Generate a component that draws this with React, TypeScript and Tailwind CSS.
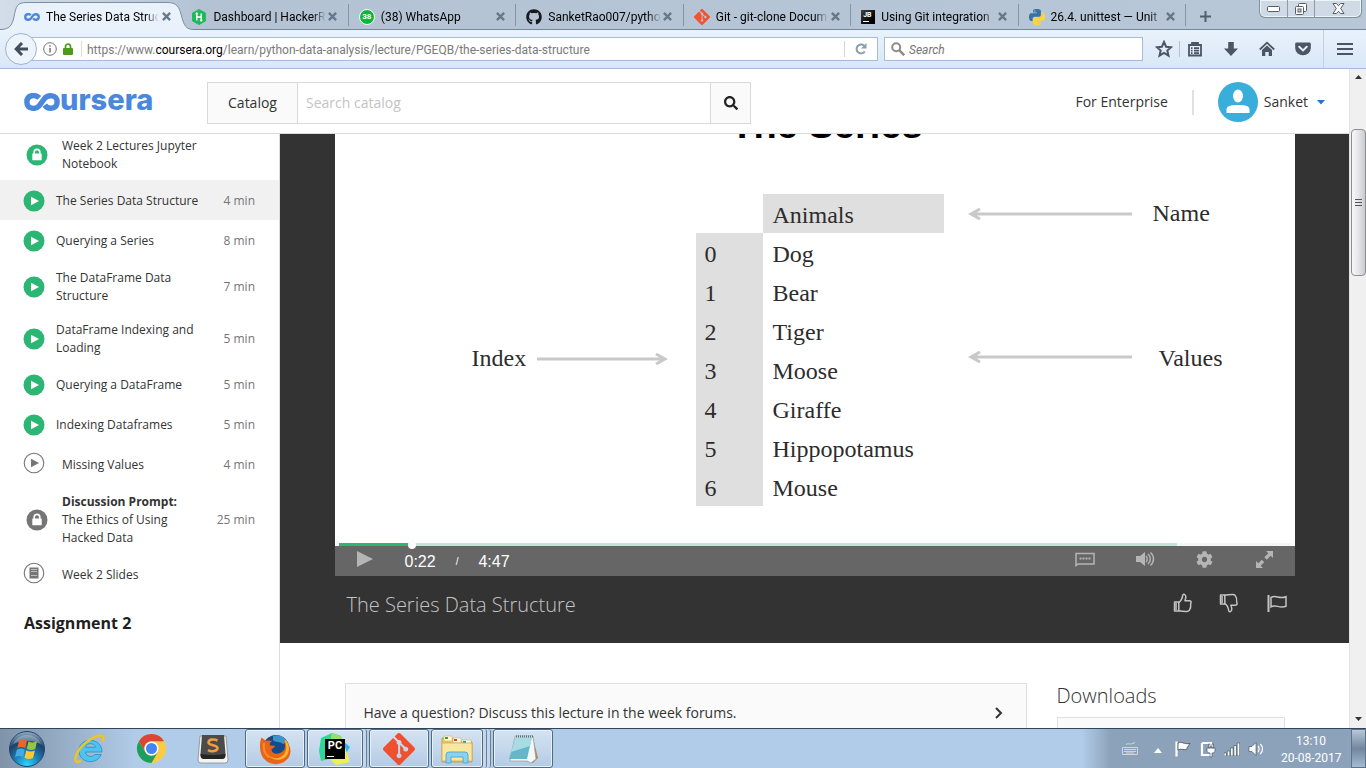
import type { ReactNode } from "react";
import { FaGithub, FaSearch, FaCog } from "react-icons/fa";
import { SiGit } from "react-icons/si";

const UI = "font-['Roboto','Noto_Sans',sans-serif]";

/* ---------- Logos and favicons ---------- */

function Loop({ className, stroke }: { className: string; stroke: number }) {
  return (
    <svg viewBox="0 0 40 20" className={className} fill="none" stroke="#4a88dc" strokeWidth={stroke} aria-hidden="true">
      <path d="M17 5.500 C13 1.500 3.200 1.500 3.200 10 C3.200 18.500 13.500 18.500 17 14 L22.500 6.500 C26.500 1.500 36.800 1.500 36.800 10 C36.800 18.500 26.500 18.500 23 13.500" />
    </svg>
  );
}

function HackerRankIcon() {
  return (
    <svg viewBox="0 0 16 16" className="size-4 shrink-0" aria-hidden="true">
      <path d="M8 .5 14.4 4v8L8 15.5 1.6 12V4z" fill="#1fb95a" stroke="#1fb95a" strokeWidth="1" strokeLinejoin="round" />
      <path d="M5.8 4.3v7.2M10.2 4.5v7.2M5.8 8h4.4M4.8 5.4l1-1.2 1 1.2M9.2 10.6l1 1.2 1-1.2" stroke="#fff" strokeWidth="1.4" fill="none" />
    </svg>
  );
}

function WhatsAppIcon() {
  return (
    <span className="relative flex size-4 shrink-0 items-center justify-center rounded-full border border-white bg-[#12b53c]">
      <span className="text-[8px] leading-none font-bold text-white">38</span>
    </span>
  );
}

function JetBrainsIcon() {
  return (
    <span className="flex size-[14px] shrink-0 flex-col justify-between bg-gradient-to-br from-[#444] to-black p-[2px]">
      <span className="text-[7px] leading-none font-bold text-white">JB</span>
      <span className="h-px w-[6px] bg-white" />
    </span>
  );
}

const snake =
  "M14.25.18l.9.2.73.26.59.3.45.32.34.34.25.34.16.33.1.3.04.26.02.2-.01.13V8.5l-.05.63-.13.55-.21.46-.26.38-.3.31-.33.25-.35.19-.35.14-.33.1-.3.07-.26.04-.21.02H8.77l-.69.05-.59.14-.5.22-.41.27-.33.32-.27.35-.2.36-.15.37-.1.35-.07.32-.04.27-.02.21v3.06H3.17l-.21-.03-.28-.07-.32-.12-.35-.18-.36-.26-.36-.36-.35-.46-.32-.59-.28-.73-.21-.88-.14-1.05-.05-1.23.06-1.22.16-1.04.24-.87.32-.71.36-.57.4-.44.42-.33.42-.24.4-.16.36-.1.32-.05.24-.01h.16l.06.01h8.16v-.83H6.18l-.01-2.75-.02-.37.05-.34.11-.31.17-.28.25-.26.31-.23.38-.2.44-.18.51-.15.58-.12.64-.1.71-.06.77-.04.84-.02 1.27.05zm-6.3 1.98l-.23.33-.08.41.08.41.23.34.33.22.41.09.41-.09.33-.22.23-.34.08-.41-.08-.41-.23-.33-.33-.22-.41-.09-.41.09z";

function PythonIcon() {
  return (
    <svg viewBox="0 0 24 24" className="size-4 shrink-0" aria-hidden="true">
      <path d={snake} fill="#3572a5" />
      <path d={snake} fill="#ffd43b" transform="rotate(180 12 12)" />
    </svg>
  );
}

/* ---------- Browser chrome ---------- */

type Tab = { title: string; icon: ReactNode; active?: boolean };

const tabs: Tab[] = [
  { title: "The Series Data Struc", icon: <Loop className="h-2 w-4 shrink-0" stroke={6} />, active: true },
  { title: "Dashboard | HackerR", icon: <HackerRankIcon /> },
  { title: "(38) WhatsApp", icon: <WhatsAppIcon /> },
  { title: "SanketRao007/pytho", icon: <FaGithub className="size-4 shrink-0 text-[#16191d]" /> },
  { title: "Git - git-clone Docum", icon: <SiGit className="size-4 shrink-0 text-[#f4512c]" /> },
  { title: "Using Git integration", icon: <JetBrainsIcon /> },
  { title: "26.4. unittest — Unit", icon: <PythonIcon /> },
];

function TabStrip() {
  return (
    <div className="relative flex h-[30px] shrink-0 items-stretch border-b border-[#74869a] bg-gradient-to-r from-[#d3dde8] via-[#b3c3d4] via-15% to-[#b7c7d8] pl-[14px]">
      <div className="grid w-[1172px] grid-cols-7" role="tablist">
        {tabs.map((tab) => (
          <div key={tab.title} role="tab" className="relative flex min-w-0 items-center pt-1">
            {tab.active && (
              <svg viewBox="0 0 194 30" className="absolute top-0 -left-[14px] h-[30px] w-[194px]" aria-hidden="true">
                <path d="M0 30 V29.5 C9 29.5 12 26 14 17 C16 6 17 2.5 27 2.5 H167 C177 2.5 179 7 181 14 C184 26 186 29.5 194 29.5 V30Z" fill="#e9f2fb" />
                <path d="M0 29.5 C9 29.5 12 26 14 17 C16 6 17 2.5 27 2.5 H167 C177 2.5 179 7 181 14 C184 26 186 29.5 194 29.5" fill="none" stroke="#7b8fa5" />
              </svg>
            )}
            <div className="relative flex min-w-0 flex-1 items-center pl-[10px]">
              {tab.icon}
              <span className="ml-[6px] min-w-0 flex-1 overflow-hidden text-[12px] leading-5 whitespace-nowrap text-black [mask-image:linear-gradient(to_right,black_88%,transparent)]">
                {tab.title}
              </span>
              <button type="button" aria-label="Close tab" className="mr-2 flex size-[14px] items-center justify-center">
                <svg viewBox="0 0 10 10" className="size-[9px]" stroke="#66788b" strokeWidth="2.6" aria-hidden="true">
                  <path d="M1 1 9 9M9 1 1 9" />
                </svg>
              </button>
            </div>
            {!tab.active && <span className="-mt-1 h-[22px] w-px bg-[#8495a7]" />}
          </div>
        ))}
      </div>
      <button type="button" aria-label="New tab" className="flex w-[38px] items-center justify-center pt-1">
        <svg viewBox="0 0 11 11" className="size-[11px]" stroke="#4f5f70" strokeWidth="2" aria-hidden="true">
          <path d="M5.500 0v11M0 5.500h11" />
        </svg>
      </button>
      <div className="mr-1 ml-auto flex h-[18px] w-[103px] rounded-b-md border border-t-0 border-[#7f90a2] bg-[#d0dae5] shadow-[inset_0_0_0_1px_#eef3f8]">
        <button type="button" aria-label="Minimize" className="flex w-7 items-center justify-center border-r border-[#8c9bac]">
          <svg viewBox="0 0 13 6" className="h-[6px] w-[13px]" aria-hidden="true">
            <rect x=".5" y=".5" width="12" height="5" rx="1" fill="#fff" stroke="#555c66" />
          </svg>
        </button>
        <button type="button" aria-label="Restore" className="flex w-[27px] items-center justify-center border-r border-[#8c9bac]">
          <svg viewBox="0 0 12 12" className="size-3" aria-hidden="true">
            <rect x="3.500" y=".5" width="8" height="8" rx="1" fill="#fff" stroke="#555c66" />
            <rect x=".5" y="3.500" width="8" height="8" rx="1" fill="#fff" stroke="#555c66" />
            <rect x="3" y="6" width="3" height="3" fill="#c9d3df" stroke="#555c66" />
          </svg>
        </button>
        <button type="button" aria-label="Close" className="flex flex-1 items-center justify-center">
          <svg viewBox="0 0 13 11" className="h-[11px] w-[13px]" aria-hidden="true">
            <path d="M1 .5h3.500l2 2.300 2-2.300H12L8.700 5.500 12 10.500H8.500l-2-2.300-2 2.300H1L4.300 5.500z" fill="#fff" stroke="#555c66" />
          </svg>
        </button>
      </div>
    </div>
  );
}

function Toolbar() {
  return (
    <div className="flex h-[39px] shrink-0 items-center border-b border-[#a3bcd8] bg-gradient-to-b from-[#e9f2fb] to-[#d8e7f7] pl-[5px]">
      <button type="button" aria-label="Back" className="relative z-10 flex size-8 items-center justify-center rounded-full border border-[#9fb3ca] bg-[#edf4fb]">
        <svg viewBox="0 0 14 14" className="size-[14px]" fill="none" stroke="#424f5c" strokeWidth="3" aria-hidden="true">
          <path d="M8 1 2.200 7 8 13M2.500 7H14" />
        </svg>
      </button>
      <div className="-ml-2 flex h-6 min-w-0 flex-1 items-center border border-[#a7bdd7] bg-white pl-[13px]">
        <svg viewBox="0 0 14 14" className="size-[14px] shrink-0" fill="none" stroke="#737373" aria-hidden="true">
          <circle cx="7" cy="7" r="6.300" />
          <path d="M7 6v4.500M7 3.200v1.600" strokeWidth="1.500" />
        </svg>
        <svg viewBox="0 0 10 12" className="ml-[6px] h-3 w-[10px] shrink-0" aria-hidden="true">
          <path d="M2.500 6V3.500a2.500 2.500 0 0 1 5 0V6" fill="none" stroke="#4a9a1c" strokeWidth="1.700" />
          <rect y="5" width="10" height="7" rx="1" fill="#4a9a1c" />
        </svg>
        <span className="mr-[5px] ml-2 h-4 w-px shrink-0 bg-[#dcdcdc]" />
        <div className="min-w-0 flex-1 overflow-hidden pt-px text-[12px] whitespace-nowrap text-[#7a7a7a]">
          https://www.<span className="text-black">coursera.org</span>/learn/python-data-analysis/lecture/PGEQB/the-series-data-structure
        </div>
        <span className="h-4 w-px bg-[#d5d5d5]" />
        <button type="button" aria-label="Reload" className="flex w-8 justify-center">
          <svg viewBox="0 0 12 12" className="size-3" aria-hidden="true">
            <path d="M9.800 8.500A4.500 4.500 0 1 1 9 2.500" fill="none" stroke="#8b9cac" strokeWidth="2" />
            <path d="M11.500 0v5.500H6z" fill="#8b9cac" />
          </svg>
        </button>
      </div>
      <div className="ml-[6px] flex h-6 w-[259px] items-center gap-1 border border-[#a7bdd7] bg-white pl-[6px]">
        <svg viewBox="0 0 14 14" className="size-[14px] shrink-0" fill="none" stroke="#8c8c8c" strokeWidth="2" aria-hidden="true">
          <circle cx="5.200" cy="5.200" r="4" />
          <path d="m8.200 8.200 5 5" strokeWidth="2.600" />
        </svg>
        <input aria-label="Search" placeholder="Search" className="min-w-0 flex-1 pt-px text-[12px] italic outline-none placeholder:text-[#757575]" />
      </div>
      <div className="flex h-full items-center text-[#4a5663]">
        <button type="button" aria-label="Bookmark" className="ml-3 flex w-[18px] justify-center">
          <svg viewBox="0 0 18 18" className="size-[18px]" fill="none" stroke="currentColor" strokeWidth="2" aria-hidden="true">
            <path d="m9 2 2.100 4.700 5 .5-3.800 3.400 1.200 5L9 13l-4.500 2.600 1.200-5L1.900 7.200l5-.5z" />
          </svg>
        </button>
        <span className="mx-[6px] h-4 w-px bg-[#b4c2d1]" />
        <button type="button" aria-label="Library" className="ml-px flex w-4 justify-center">
          <svg viewBox="0 0 16 16" className="size-4" fill="none" stroke="currentColor" strokeWidth="1.800" aria-hidden="true">
            <path d="M2 4h12v10.500H2zM4 7.200h1.500M7 7.200h5M4 9.700h1.500M7 9.700h5M4 12.200h1.500M7 12.200h5" />
            <path d="M5 4V2h6v2" />
          </svg>
        </button>
        <button type="button" aria-label="Downloads" className="ml-5 flex w-4 justify-center">
          <svg viewBox="0 0 16 16" className="size-4" fill="currentColor" aria-hidden="true">
            <path d="M5.200 1h5.600v6.500H15L8 15 1 7.500h4.200z" />
          </svg>
        </button>
        <button type="button" aria-label="Home" className="ml-5 flex w-4 justify-center">
          <svg viewBox="0 0 16 16" className="size-4" fill="none" stroke="currentColor" strokeWidth="1.800" aria-hidden="true">
            <path d="M.8 8.500 8 1.700l7.200 6.800" />
            <path d="M3 9 8 4.500 13 9v6h-3.300v-4H6.300v4H3z" fill="currentColor" stroke="none" />
          </svg>
        </button>
        <button type="button" aria-label="Pocket" className="ml-5 flex w-4 justify-center">
          <svg viewBox="0 0 16 16" className="size-4" aria-hidden="true">
            <path d="M1.500 1.500h13q1.300 0 1.300 1.300V7a7.800 7.300 0 0 1-15.600 0V2.800q0-1.300 1.300-1.300" fill="currentColor" />
            <path d="m4.200 5.700 3.800 3.700 3.800-3.700" fill="none" stroke="#e6eff8" strokeWidth="2" strokeLinecap="round" />
          </svg>
        </button>
        <span className="ml-3 h-full w-px bg-[#c2d1e1]" />
        <button type="button" aria-label="Menu" className="mr-[13px] ml-[13px] flex w-4 flex-col gap-[3px]">
          <span className="h-[2px] w-full bg-current" />
          <span className="h-[2px] w-full bg-current" />
          <span className="h-[2px] w-full bg-current" />
        </button>
      </div>
    </div>
  );
}

/* ---------- Site header ---------- */

function SiteHeader() {
  return (
    <header className="flex h-[65px] shrink-0 items-start border-b border-[#dcdcdc] bg-white px-6 pt-[13px] text-[14px] text-[#333]">
      <a href="#home" aria-label="Coursera" className="flex h-10 w-[183px] items-center text-[#4a88dc]">
        <Loop className="h-[18px] w-9" stroke={6} />
        <span className="-mt-1 font-['Inter',sans-serif] text-[29px] leading-8 font-extrabold">ursera</span>
      </a>
      <form className="flex h-[42px] w-[544px] border border-[#d9d9d9]" onSubmit={(e) => e.preventDefault()}>
        <button type="button" className="w-[90px] border-r border-[#d9d9d9] bg-[#fafafa] pb-[2px] text-[14px]">Catalog</button>
        <input aria-label="Search catalog" placeholder="Search catalog" className="min-w-0 flex-1 px-2 pb-[2px] outline-none placeholder:text-[#c4c4c4]" />
        <button type="submit" aria-label="Search" className="flex w-10 items-center justify-center border-l border-[#d9d9d9] bg-[#fafafa]">
          <FaSearch className="size-[14px] text-[#222]" />
        </button>
      </form>
      <div className="ml-auto flex h-10 items-center">
        <a href="#enterprise" className="pb-[2px]">For Enterprise</a>
        <span className="mr-6 ml-6 h-[25px] w-[2px] bg-[#e0e0e0]" />
        <button type="button" className="flex items-center">
          <svg viewBox="0 0 40 40" className="size-10" aria-hidden="true">
            <circle cx="20" cy="20" r="20" fill="#3aaedb" />
            <ellipse cx="20" cy="14" rx="5" ry="6.500" fill="#fff" />
            <path d="M8.500 31v-3.500c0-4 6-4.500 11.500-4.500s11.500.5 11.500 4.500V31z" fill="#fff" />
          </svg>
          <span className="ml-[6px] pb-[2px]">Sanket</span>
          <svg viewBox="0 0 8 5" className="ml-[9px] h-[5px] w-2" aria-hidden="true">
            <path d="M0 0h8L4 4.500z" fill="#2a73cc" />
          </svg>
        </button>
      </div>
    </header>
  );
}

/* ---------- Lesson list ---------- */

type Kind = "lock-done" | "play-done" | "play" | "lock" | "slides";
type Lesson = { title: string; prefix?: string; time?: string; kind: Kind; current?: boolean };

const lessons: Lesson[] = [
  { title: "Week 2 Lectures Jupyter Notebook", kind: "lock-done" },
  { title: "The Series Data Structure", time: "4 min", kind: "play-done", current: true },
  { title: "Querying a Series", time: "8 min", kind: "play-done" },
  { title: "The DataFrame Data Structure", time: "7 min", kind: "play-done" },
  { title: "DataFrame Indexing and Loading", time: "5 min", kind: "play-done" },
  { title: "Querying a DataFrame", time: "5 min", kind: "play-done" },
  { title: "Indexing Dataframes", time: "5 min", kind: "play-done" },
  { title: "Missing Values", time: "4 min", kind: "play" },
  { prefix: "Discussion Prompt:", title: "The Ethics of Using Hacked Data", time: "25 min", kind: "lock" },
  { title: "Week 2 Slides", kind: "slides" },
];

function LessonIcon({ kind }: { kind: Kind }) {
  const locked = kind === "lock" || kind === "lock-done";
  const filled = locked || kind === "play-done";
  const color = kind === "play-done" || kind === "lock-done" ? "#2bb673" : "#757575";
  const ink = filled ? "#fff" : color;
  return (
    <svg viewBox="0 0 22 22" className="size-[22px]" aria-hidden="true">
      {filled ? (
        <circle cx="11" cy="11" r="10.500" fill={color} />
      ) : (
        <circle cx="11" cy="11" r="9.800" fill="none" stroke={color} strokeWidth="1.100" />
      )}
      {locked && (
        <>
          <path d="M8.200 10V8.200a2.800 2.800 0 0 1 5.600 0V10" fill="none" stroke={ink} strokeWidth="1.600" />
          <rect x="6.300" y="9.500" width="9.400" height="6.700" rx=".5" fill={ink} />
        </>
      )}
      {(kind === "play" || kind === "play-done") && <path d="M8 6.700v8.600l8-4.300z" fill={ink} />}
      {kind === "slides" && (
        <>
          <rect x="6.500" y="5.500" width="9" height="11" fill={ink} />
          <path d="M8 7.500h6M8 9.500h6M8 13.500h6" stroke="#cfcfcf" strokeWidth=".8" />
        </>
      )}
    </svg>
  );
}

function Sidebar() {
  return (
    <nav className="w-[280px] shrink-0 overflow-hidden border-r border-[#dcdcdc] bg-white text-[12px] leading-[18px] text-[#333]">
      <ul className="-mt-[6px]">
        {lessons.map((l) => {
          const locked = l.kind === "lock" || l.kind === "lock-done";
          const raised = l.kind === "play" || l.kind === "slides";
          return (
            <li key={l.title}>
              <a href="#lesson" className={`flex min-h-10 items-center pt-[9px] pr-6 pb-[7px] ${locked ? "pl-[26px]" : "pl-[23px]"} ${l.current ? "bg-[#f1f1f1]" : ""}`}>
                <span className={raised ? "-mt-1" : ""}>
                  <LessonIcon kind={l.kind} />
                </span>
                <span className={`min-w-0 flex-1 ${raised ? "ml-[17px]" : locked ? "ml-[14px]" : "ml-[11px]"}`}>
                  <span className={`block ${l.time ? "max-w-[150px]" : "max-w-[160px]"} ${l.kind === "lock" ? "pr-5" : ""}`}>
                    {l.prefix && <strong className="block font-bold whitespace-nowrap">{l.prefix}</strong>}
                    {l.title}
                  </span>
                </span>
                {l.time && <span className="whitespace-nowrap text-[#757575]">{l.time}</span>}
              </a>
            </li>
          );
        })}
      </ul>
      <h2 className="mt-[18px] pl-6 text-[16px] leading-[22px] font-bold text-[#1f1f1f]">Assignment 2</h2>
    </nav>
  );
}

/* ---------- Video ---------- */

function Arrow({ left, className }: { left?: boolean; className: string }) {
  return (
    <svg viewBox="0 0 164 12" preserveAspectRatio={left ? "xMinYMid slice" : "xMaxYMid slice"} className={className} fill="none" stroke="#c9c9c9" strokeWidth="3" aria-hidden="true">
      {left ? <path d="M3 6H164M12 1 3 6l9 5" /> : <path d="M0 6H161M152 1l9 5-9 5" />}
    </svg>
  );
}

const animals = ["Dog", "Bear", "Tiger", "Moose", "Giraffe", "Hippopotamus", "Mouse"];

function Slide() {
  return (
    <div className="overflow-hidden bg-white pb-10 font-['Liberation_Serif',serif] text-[24px] leading-[35px] text-[#2c2c2c]">
      <h1 className="-mt-[29px] pl-6 text-center font-['Liberation_Sans',sans-serif] text-[38px] leading-10 font-bold text-black">The Series</h1>
      <div className="mt-[49px] flex">
        <div className="flex-1 pt-[145px] pl-[137px]">
          <div className="flex h-[39px] items-center gap-[11px]">
            Index
            <Arrow className="h-3 w-[131px]" />
          </div>
        </div>
        <table className="w-[248px] shrink-0 border-collapse text-left">
          <thead>
            <tr className="h-[39px]">
              <td className="w-[67px] p-0" />
              <th scope="col" className="bg-[#dfdfdf] p-0 pt-1 pl-[10px] font-normal">Animals</th>
            </tr>
          </thead>
          <tbody>
            {animals.map((name, i) => (
              <tr key={name} className="h-[39px]">
                <th scope="row" className="bg-[#dfdfdf] p-0 pt-1 pl-[9px] font-normal">{i}</th>
                <td className="p-0 pt-1 pl-[10px]">{name}</td>
              </tr>
            ))}
          </tbody>
        </table>
        <div className="w-[351px] pl-6">
          <div className="flex h-[39px] items-center gap-[21px]">
            <Arrow left className="h-3 w-[164px]" />
            Name
          </div>
          <div className="mt-[106px] flex h-[39px] items-center gap-[27px]">
            <Arrow left className="mb-1 h-3 w-[164px]" />
            Values
          </div>
        </div>
      </div>
    </div>
  );
}

function ThumbIcon({ down }: { down?: boolean }) {
  return (
    <svg viewBox="0 0 20 20" className={`size-5 ${down ? "-scale-y-100" : ""}`} fill="none" stroke="currentColor" strokeWidth="1.500" strokeLinejoin="round" aria-hidden="true">
      <path d="M1.500 9h4.300v9H1.500z" />
      <path d="M2.300 10h1.500v7H2.300z" fill="currentColor" stroke="none" />
      <path d="M5.800 9.500c3-2 3.500-4 4-7.300.3-1.500 3-1.200 3 1.800 0 1.500-.6 2.700-.9 3.800h4.400c2 0 2.200 1.700 1.400 2.800.3 3-.2 5.200-1.400 6.800-.6.900-1.500 1-2.700 1-3.500 0-4.600 0-7.800-.7" />
    </svg>
  );
}

function Player() {
  return (
    <section className="bg-[#333] pb-[25px]">
      <div className="mx-auto max-w-[960px]">
        <Slide />
        <div className="-mt-[3px] flex h-[3px] px-1">
          <div className="relative w-[73px] bg-[#2bb673]">
            <span className="absolute -right-1 -bottom-[3px] size-2 rounded-full bg-white" />
          </div>
          <div className="w-[765px] bg-[#c3e6d6]" />
          <div className="flex-1 bg-[#f5f5f5]" />
        </div>
        <div className="flex h-[30px] items-center bg-[#666] font-['Liberation_Sans',sans-serif] text-[16px] text-white">
          <button type="button" aria-label="Play" className="ml-[22px] w-4 pb-1">
            <svg viewBox="0 0 16 16" className="size-4" aria-hidden="true"><path d="M0 0v16l16-8z" fill="#b5b5b5" /></svg>
          </button>
          <span className="ml-8 pt-px">0:22</span>
          <span className="ml-5 pt-px text-[10px]">/</span>
          <span className="ml-5 pt-px">4:47</span>
          <div className="ml-auto flex items-center gap-10 pr-5 pb-1 text-[#b5b5b5]">
            <button type="button" aria-label="Subtitles">
              <svg viewBox="0 0 20 16" className="h-4 w-5" fill="none" stroke="currentColor" strokeWidth="1.500" aria-hidden="true">
                <path d="M1 14.500V2.500h18v10.500H3z" />
                <path d="M4.500 7.500h11" strokeWidth="2" strokeDasharray="2 1" />
              </svg>
            </button>
            <button type="button" aria-label="Volume">
              <svg viewBox="0 0 20 16" className="h-4 w-5" fill="none" stroke="currentColor" strokeWidth="1.500" aria-hidden="true">
                <path d="M1 5h4l5-4v14l-5-4H1z" fill="currentColor" stroke="none" />
                <path d="M11 5c1.500 1.500 1.500 4.500 0 6M13 3c3 2.500 3 7.500 0 10M15.500 1.500c4 3.500 4 9.500 0 13" />
              </svg>
            </button>
            <button type="button" aria-label="Settings" className="flex w-5 justify-center"><FaCog className="size-[17px]" /></button>
            <button type="button" aria-label="Full screen" className="flex w-5 justify-center">
              <svg viewBox="0 0 17 17" className="size-[17px]" fill="currentColor" aria-hidden="true">
                <path d="M10 0h7v7l-2.300-2.300-4 4-2.400-2.400 4-4zM7 17H0v-7l2.300 2.300 4-4 2.400 2.400-4 4z" />
                <path d="M6 8l3 3" stroke="#666" strokeWidth="1.300" />
              </svg>
            </button>
          </div>
        </div>
        <div className="flex h-[42px] items-center pt-4 pr-2 pl-3 text-[#c4c4c4]">
          <h2 className="text-[20px] leading-6 font-light">The Series Data Structure</h2>
          <div className="ml-auto flex items-center gap-[26px] pb-1">
            <button type="button" aria-label="Like"><ThumbIcon /></button>
            <button type="button" aria-label="Dislike"><ThumbIcon down /></button>
            <button type="button" aria-label="Report" className="ml-[2px]">
              <svg viewBox="0 0 20 20" className="size-5" fill="none" stroke="currentColor" strokeWidth="1.500" aria-hidden="true">
                <path d="M1.500 2v17" strokeWidth="2" />
                <path d="M4 4.500c5-3 8 2 15-.800v9.500c-7 2.800-10-2.500-15 .600z" />
              </svg>
            </button>
          </div>
        </div>
      </div>
    </section>
  );
}

function LowerPanels() {
  return (
    <div className="flex-1 bg-white text-[#333]">
      <div className="mx-auto flex max-w-[940px] gap-[30px] pt-10">
        <a href="#forums" className="flex h-[60px] flex-1 items-center justify-between border border-[#e0e0e0] bg-[#fafafa] pr-[23px] pl-[18px] text-[14px] leading-5">
          Have a question? Discuss this lecture in the week forums.
          <svg viewBox="0 0 8 12" className="h-3 w-2" fill="none" stroke="#333" strokeWidth="2" aria-hidden="true"><path d="m1 1 5 5-5 5" /></svg>
        </a>
        <aside className="w-[228px]">
          <h2 className="pt-px text-[20px] leading-6 font-light">Downloads</h2>
          <div className="mt-[9px] h-12 border border-[#e0e0e0] bg-[#fafafa]" />
        </aside>
      </div>
    </div>
  );
}

function ScrollBar() {
  return (
    <div className="flex w-[17px] shrink-0 flex-col items-center border-l border-[#e3e3e3] bg-[#f0f0f0] py-[6px]" aria-hidden="true">
      <svg viewBox="0 0 7 5" className="h-[5px] w-[7px]"><path d="M0 4h7L3.500 0z" fill="#333" /></svg>
      <div className="mt-[49px] flex h-[147px] w-[15px] flex-col items-center justify-center gap-[2px] rounded-sm border border-[#8f8f8f] bg-gradient-to-r from-[#f7f7f7] via-[#e6e6e9] to-[#c9c9d0]">
        <span className="h-px w-[7px] bg-[#555]" />
        <span className="h-px w-[7px] bg-[#555]" />
        <span className="h-px w-[7px] bg-[#555]" />
      </div>
      <svg viewBox="0 0 7 5" className="mt-auto h-[5px] w-[7px]"><path d="M0 0h7L3.500 4z" fill="#333" /></svg>
    </div>
  );
}

/* ---------- Taskbar ---------- */

function StartIcon() {
  return (
    <svg viewBox="0 0 38 38" className="size-[38px]" aria-hidden="true">
      <defs>
        <radialGradient id="orb" cx=".5" cy=".95" r=".9">
          <stop offset="0" stopColor="#2fd6ff" />
          <stop offset=".4" stopColor="#1b7fb8" />
          <stop offset=".75" stopColor="#1d4267" />
          <stop offset="1" stopColor="#7f9fbb" />
        </radialGradient>
      </defs>
      <circle cx="19" cy="19" r="17.500" fill="url(#orb)" stroke="#234565" />
      <path d="M5 14a15 14 0 0 1 28 0c-8-4-20-4-28 0" fill="#fff" opacity=".3" />
      <path d="M11 11c3-2 5-2 8-.3L17.300 18c-3-1.500-5-1.500-8 0z" fill="#f0642c" />
      <path d="M20.500 11.300c3 1.600 5.500 1.500 8.500 0L27.300 19c-3 1.500-5.500 1.300-8.500-.3z" fill="#93c83e" />
      <path d="M8.800 19.800c3-1.700 5-1.700 8-.1L15 27c-3-1.500-5-1.500-8 .3z" fill="#46a8e6" />
      <path d="M18.300 20.300c3 1.600 5.500 1.700 8.600.1L25 28c-3 1.500-5.500 1.500-8.500-.3z" fill="#fdca31" />
    </svg>
  );
}

function IeIcon() {
  return (
    <svg viewBox="0 0 32 32" className="size-8" fill="none" aria-hidden="true">
      <path d="M28 19H11.500c.5 5 7.500 5.700 9.300 2.500h6.400C23.500 32 5 31 5 17.500S28 3.500 28 19zM11.500 14.200h10c-.7-4.700-9.200-4.700-10 0z" fill="#4fc3f0" stroke="#218fc5" strokeWidth=".8" fillRule="evenodd" />
      <path d="M7 27.500C1 31.500-.5 27 4 18.500 9 9.500 24 .5 28.500 3c1.900 1.200.8 4-.5 6" stroke="#f3c31f" strokeWidth="2.500" />
    </svg>
  );
}

function ChromeIcon() {
  return (
    <svg viewBox="0 0 32 32" className="size-[31px]" aria-hidden="true">
      <circle cx="16" cy="16" r="15" fill="#fbcb43" />
      <path d="M3 8.500A15 15 0 0 1 29 8.500H16a7.500 7.500 0 0 0-6.500 11.200z" fill="#dc4437" />
      <path d="M3 8.500 9.500 19.700A7.500 7.500 0 0 0 22.500 19.700L16 31A15 15 0 0 1 3 8.500" fill="#1a9f5c" />
      <circle cx="16" cy="16" r="7.200" fill="#fff" />
      <circle cx="16" cy="16" r="5.700" fill="#4385f5" />
    </svg>
  );
}

function SublimeIcon() {
  return (
    <svg viewBox="0 0 32 32" className="size-8" aria-hidden="true">
      <path d="M3 3h26l2 24q0 3-3 3H4q-3 0-3-3z" fill="#f3f3f3" stroke="#8a8a8a" strokeWidth=".8" />
      <path d="M5 2h22l1.500 19q0 4-3 4h-19q-3 0-3-4z" fill="#4b4b4b" />
      <path d="M3.500 21q12 2 25 0v1q0 4-3 4h-19q-3 0-3-4z" fill="#252525" />
      <path d="M20.500 7.500c-4-2-9-1-9 2s9 2.500 9 5.500-6 4.500-9.500 2" fill="none" stroke="#f49b3c" strokeWidth="2.600" />
    </svg>
  );
}

function FirefoxIcon() {
  return (
    <svg viewBox="0 0 32 32" className="size-8" aria-hidden="true">
      <circle cx="17" cy="15" r="13" fill="#174b88" />
      <path d="M14 3c5-2 12 0 14 6l-4 2c-3-3-8-1-10-4z" fill="#3d93cc" />
      <path d="M2.500 4.500 7 8c2-.8 4-.6 6 .1-2 1.300-2.500 2.700-2 4.400l5 .3c0 2-3 2.700-3.600 4 .6 4.200 6.100 5.200 10.600 2.200 4-2.500 3.500-8 1.500-12 7 3 9 12 4.800 18-6 8-18 8-24 1C.5 21.500-.1 11 2.500 4.500z" fill="#e9631b" />
      <path d="M27 7c5 7 3 15-2 18-7 4-14 1-17-5 4 7 13 6 16.500 2C28 18 28 12 25.500 7.500z" fill="#fbb526" />
      <path d="M5 10c-1 6 .5 11 5 14.500" fill="none" stroke="#f79025" strokeWidth="2" />
    </svg>
  );
}

function PyCharmIcon() {
  return (
    <span className="relative flex size-8 items-center justify-center">
      <svg viewBox="0 0 32 32" className="absolute inset-0 size-8" aria-hidden="true">
        <path d="M2 5 13 0l9 3-8 22-12 3-2-10z" fill="#30d59a" />
        <path d="M13 0 23 4 22 12 10 12z" fill="#9be05d" />
        <path d="m24 8 7 6-5 8-6-6z" fill="#22b9ef" />
        <path d="m26 14 5 15-14 3-8-8z" fill="#e9f252" />
      </svg>
      <span className="relative flex size-5 flex-col justify-between bg-black p-[2px]">
        <span className="text-[11px] leading-[9px] font-bold text-white">PC</span>
        <span className="h-px w-[7px] bg-white" />
      </span>
    </span>
  );
}

function ExplorerIcon() {
  return (
    <svg viewBox="0 0 34 32" className="h-8 w-[34px]" aria-hidden="true">
      <path d="M2 5h10l2 2h6l1 2h11v20H2z" fill="#e9c768" stroke="#b99538" strokeWidth=".8" />
      <path d="M4 3h8v5H4zM13 5h8v5h-8zM22 7h9v5h-9z" fill="#fff8dd" stroke="#c9a850" strokeWidth=".5" />
      <path d="M5 4h3v2H5z" fill="#31a532" />
      <path d="M14 6h3v2h-3z" fill="#d6452b" />
      <path d="M23 8h3v2h-3z" fill="#2c8fd8" />
      <path d="M2 10h30v18H2z" fill="#f9e7a0" stroke="#cfad55" strokeWidth=".8" />
      <path d="M6 30v-8q0-3 3-3h16q3 0 3 3v8h-5v-6H11v6z" fill="#8bd2ee" stroke="#4ba6ce" strokeWidth=".9" />
    </svg>
  );
}

function NotepadIcon() {
  return (
    <svg viewBox="0 0 34 32" className="h-8 w-[34px]" aria-hidden="true">
      <path d="m27 5 5 20-5 5-7-2z" fill="#b58a4b" />
      <path d="M9 3h18l3 23-5 4-4-2H4z" fill="#f4f7f8" stroke="#8a9ba3" strokeWidth=".7" />
      <path d="M10 4h16l-5 22H3z" fill="#64b7c9" />
      <path d="M10 4h16l-2 9L5 19z" fill="#a8dce4" />
      <path d="M10 3.500h17" stroke="#5f6b70" strokeWidth="2" strokeDasharray="1 1" />
    </svg>
  );
}

function TaskButton({ label, stack = 0, className, children }: { label: string; stack?: number; className: string; children: ReactNode }) {
  return (
    <div className="flex h-full">
      <button type="button" aria-label={label} className={`flex h-[39px] items-center justify-center rounded-[3px] border border-[#53697f] bg-gradient-to-b from-[#d5e3f2] to-[#b3cbe5] shadow-[inset_0_0_0_1px_#e8f1fa] ${className}`}>
        {children}
      </button>
      {Array.from({ length: stack }, (_, i) => (
        <span key={i} className="h-[39px] w-1 rounded-r-[3px] border-r border-[#6a8098] bg-[#c4d6e9]" />
      ))}
    </div>
  );
}

function Taskbar() {
  return (
    <footer className="flex h-10 shrink-0 items-center border-t border-[#30455c] bg-gradient-to-r from-[#8093a9] via-[#b1cce9] via-10% to-[#b1cce9] text-[12px] text-white">
      <button type="button" aria-label="Start" className="ml-2"><StartIcon /></button>
      <div className="ml-7 flex items-center gap-[30px]">
        <button type="button" aria-label="Internet Explorer"><IeIcon /></button>
        <button type="button" aria-label="Chrome"><ChromeIcon /></button>
        <button type="button" aria-label="Sublime Text"><SublimeIcon /></button>
      </div>
      <div className="ml-4 flex h-full items-start gap-[2px]">
        <TaskButton label="Firefox" className="w-[60px]"><FirefoxIcon /></TaskButton>
        <TaskButton label="PyCharm" stack={1} className="w-[56px]"><PyCharmIcon /></TaskButton>
        <TaskButton label="Git" className="w-[60px]"><SiGit className="size-8 text-[#f1502f]" /></TaskButton>
        <TaskButton label="Explorer" stack={2} className="w-[52px]"><ExplorerIcon /></TaskButton>
        <TaskButton label="Notepad" className="w-[60px]"><NotepadIcon /></TaskButton>
      </div>
      <div className="ml-auto flex h-full items-center bg-gradient-to-r from-transparent via-[#8ca2ba] via-10% to-[#8ca2ba] pl-10">
        <div className="flex items-center gap-2">
          <svg viewBox="0 0 16 16" className="size-4" fill="none" stroke="#d5d5d5" strokeWidth="1" aria-hidden="true">
            <path d="M.5 6.500h15v7H.5zM2 8.500h12M2 10.500h12M4 12h8M4 3.500c3-2 3 1 9-2" />
          </svg>
          <svg viewBox="0 0 8 5" className="mt-1 mr-1 ml-2 h-[5px] w-2" aria-hidden="true"><path d="M0 5h8L4 0z" fill="#fff" /></svg>
          <svg viewBox="0 0 18 18" className="size-[18px]" aria-hidden="true">
            <path d="M2.500 1.500v15" stroke="#fff" strokeWidth="2.200" />
            <path d="M4 3c4-2 5 1.500 12 .5-2 3-3 4-3.500 6C9 10.500 8 8 4 10z" fill="#fff" stroke="#394958" strokeWidth=".8" />
          </svg>
          <svg viewBox="0 0 16 18" className="h-[18px] w-4" aria-hidden="true">
            <path d="M2 3h9v3M2 3v12h9" fill="none" stroke="#fff" strokeWidth="2.200" />
            <path d="M7 8h8v3q0 2-3 2v4h-2v-4q-3 0-3-2zM8.500 4h1.500v4H8.500zM12 4h1.500v4H12z" fill="#fff" stroke="#394958" strokeWidth=".6" />
          </svg>
          <svg viewBox="0 0 16 14" className="h-[14px] w-4" fill="#fff" stroke="#394958" strokeWidth=".6" aria-hidden="true">
            <path d="M0 11h2.500v3H0zM3.300 9h2.500v5H3.300zM6.600 6h2.500v8H6.600zM9.900 3.500h2.500V14H9.900zM13.200 1h2.500v13h-2.500z" />
          </svg>
          <svg viewBox="0 0 16 16" className="size-4" fill="none" stroke="#fff" strokeWidth="1.200" aria-hidden="true">
            <path d="M1 5.500h3l4-4v13l-4-4H1z" fill="#fff" stroke="#394958" strokeWidth=".6" />
            <path d="M10 5c1.500 1.500 1.500 4.500 0 6M12.300 3c3 3 3 7 0 10" />
          </svg>
        </div>
        <div className="ml-[17px] w-[60px] pt-[2px] text-center leading-[17px] whitespace-nowrap">
          <div>13:10</div>
          <div>20-08-2017</div>
        </div>
        <button type="button" aria-label="Show desktop" className="ml-[10px] h-full w-[15px] border border-[#5e7389] bg-gradient-to-b from-[#b8c8d8] via-[#72879e] to-[#a4bbd3]" />
      </div>
    </footer>
  );
}

export default function App() {
  return (
    <div className={`flex h-screen flex-col overflow-hidden bg-white ${UI}`}>
      <TabStrip />
      <Toolbar />
      <div className="flex min-h-0 flex-1 font-['Open_Sans','Noto_Sans',sans-serif]">
        <div className="flex min-w-0 flex-1 flex-col">
          <SiteHeader />
          <div className="flex min-h-0 flex-1">
            <Sidebar />
            <main className="flex min-w-0 flex-1 flex-col overflow-hidden">
              <Player />
              <LowerPanels />
            </main>
          </div>
        </div>
        <ScrollBar />
      </div>
      <Taskbar />
    </div>
  );
}
